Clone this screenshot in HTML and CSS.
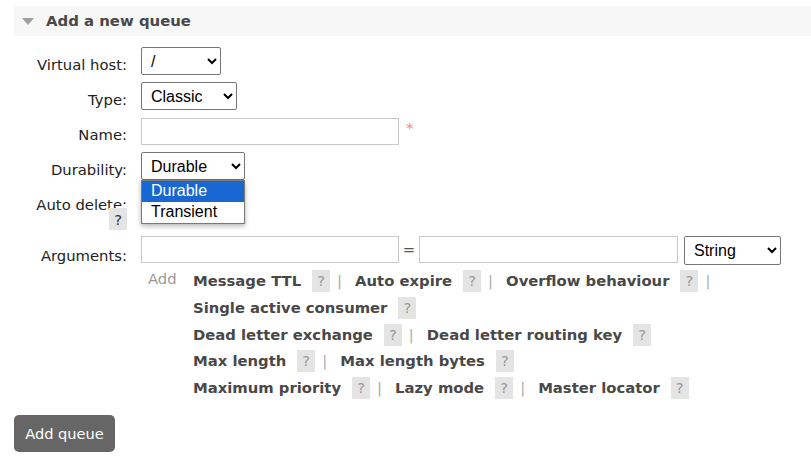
FILE: index.html
```html
<!DOCTYPE html>
<html>
<head>
<meta charset="utf-8">
<link rel="stylesheet" href="styles.css">
</head>
<body>
<div class="page">
  <div class="section-head">
    <svg class="tri" width="12" height="7" viewBox="0 0 12 7"><polygon points="0,0 12,0 6,7" fill="#a0a0a0"/></svg>
    <h2 class="title">Add a new queue</h2>
  </div>
  <div class="form">
    <div class="lbl">Virtual host:</div>
    <div class="fld"><select class="sel w-vhost"><option>/</option></select></div>

    <div class="lbl">Type:</div>
    <div class="fld"><select class="sel w-type"><option>Classic</option></select></div>

    <div class="lbl">Name:</div>
    <div class="fld"><input class="txt w-name" type="text"><span class="req">*</span></div>

    <div class="lbl">Durability:</div>
    <div class="fld drop-host">
      <select class="sel w-dur"><option>Durable</option></select>
      <div class="dropdown">
        <div class="opt opt-active">Durable</div>
        <div class="opt">Transient</div>
      </div>
    </div>

    <div class="lbl">Auto delete:<br><span class="help-inline">?</span></div>
    <div class="fld"><select class="sel w-auto"><option>No</option></select></div>

    <div class="lbl lbl-args">Arguments:</div>
    <div class="fld args">
      <div class="args-row">
        <input class="txt w-key" type="text">
        <span class="eq">=</span>
        <input class="txt w-val" type="text">
        <select class="sel w-str"><option>String</option></select>
      </div>
      <div class="args-add">
        <span class="add">Add</span>
        <div class="links">
          <div class="line"><span class="al">Message TTL</span><span class="help">?</span><span class="pipe">|</span><span class="al">Auto expire</span><span class="help">?</span><span class="pipe">|</span><span class="al">Overflow behaviour</span><span class="help">?</span><span class="pipe">|</span></div>
          <div class="line"><span class="al">Single active consumer</span><span class="help">?</span></div>
          <div class="line"><span class="al">Dead letter exchange</span><span class="help">?</span><span class="pipe">|</span><span class="al">Dead letter routing key</span><span class="help">?</span></div>
          <div class="line"><span class="al">Max length</span><span class="help">?</span><span class="pipe">|</span><span class="al">Max length bytes</span><span class="help">?</span></div>
          <div class="line"><span class="al">Maximum priority</span><span class="help">?</span><span class="pipe">|</span><span class="al">Lazy mode</span><span class="help">?</span><span class="pipe">|</span><span class="al">Master locator</span><span class="help">?</span></div>
        </div>
      </div>
    </div>
  </div>
  <button class="btn">Add queue</button>
</div>
</body>
</html>
```

FILE: styles.css
```css
html, body {
  margin: 0;
  padding: 0;
  background: #fff;
}
body {
  font-family: "DejaVu Sans", Verdana, sans-serif;
  font-size: 14.8px;
  color: #222;
}
.page {
  padding: 6px 0 0 14px;
}
.section-head {
  height: 30px;
  background: #f7f7f7;
  display: flex;
  align-items: center;
}
.tri {
  margin-left: 8px;
  margin-right: 12px;
  display: block;
}
.title {
  margin: 0;
  font-size: 14.9px;
  font-weight: bold;
  color: #484848;
}
.form {
  display: grid;
  grid-template-columns: 113px auto;
  column-gap: 14px;
  row-gap: 7px;
  margin-top: 11px;
  align-items: start;
}
.lbl {
  text-align: right;
  padding: 11px 0 3px;
  line-height: 14px;
  color: #222;
}
.lbl-args {
  padding-top: 13px;
}
.fld {
  display: flex;
  align-items: center;
  min-height: 28px;
}
.sel {
  font-family: "Liberation Sans", Arial, sans-serif;
  font-size: 16px;
  height: 28px;
  border: 1px solid #767676;
  border-radius: 2px;
  background: #fff;
  color: #000;
  padding: 0 0 0 5px;
  margin: 0;
}
.w-vhost { width: 80px; }
.w-type { width: 96px; }
.w-dur { width: 104px; }
.w-auto { width: 70px; }
.w-str { width: 97px; height: 29px; margin-left: 6px; }
.txt {
  height: 27px;
  box-sizing: border-box;
  border: 1px solid #c8c8c8;
  margin: 0;
  padding: 4px;
  font-family: "Liberation Sans", Arial, sans-serif;
  font-size: 14px;
}
.w-name { width: 258px; }
.w-key { width: 258px; }
.w-val { width: 259px; }
.req {
  color: #ff8080;
  margin-left: 7px;
  align-self: flex-start;
  line-height: 22px;
}
.drop-host {
  position: relative;
}
.dropdown {
  position: absolute;
  left: 0;
  top: 28px;
  width: 102px;
  border: 1px solid #7a7a7a;
  background: #fff;
  box-shadow: 0 2px 5px rgba(0, 0, 0, 0.3);
  z-index: 5;
  padding-bottom: 1px;
  font-family: "Liberation Sans", Arial, sans-serif;
  font-size: 16px;
  color: #000;
}
.opt {
  height: 20.5px;
  line-height: 20px;
  padding-left: 9px;
}
.opt-active {
  background: #1967d2;
  color: #fff;
}
.help-inline {
  background: #e4e4e4;
  color: #333;
  padding: 2.5px 5px;
}
.args {
  flex-direction: column;
  align-items: flex-start;
}
.args-row {
  display: flex;
  align-items: flex-start;
}
.eq {
  width: 20px;
  text-align: center;
  color: #555;
  line-height: 27px;
}
.args-add {
  display: flex;
  margin-top: 3px;
}
.add {
  color: #999;
  margin-left: 7px;
  width: 45px;
  line-height: 22px;
}
.links {
  display: flex;
  flex-direction: column;
}
.line {
  line-height: 26.8px;
  height: 26.8px;
  white-space: nowrap;
}
.al {
  font-weight: bold;
  color: #484848;
}
.help {
  display: inline-block;
  width: 18px;
  height: 22px;
  line-height: 22px;
  text-align: center;
  background: #e4e4e4;
  color: #999;
  vertical-align: middle;
  margin: -2px 7px 0 11px;
}
.pipe {
  color: #aaa;
  margin-right: 13px;
}
.btn {
  margin-top: 13px;
  background: #666;
  color: #fff;
  border: none;
  border-radius: 5px;
  font-family: "DejaVu Sans", Verdana, sans-serif;
  font-size: 14.6px;
  height: 37px;
  width: 101px;
  padding: 0;
}
```
